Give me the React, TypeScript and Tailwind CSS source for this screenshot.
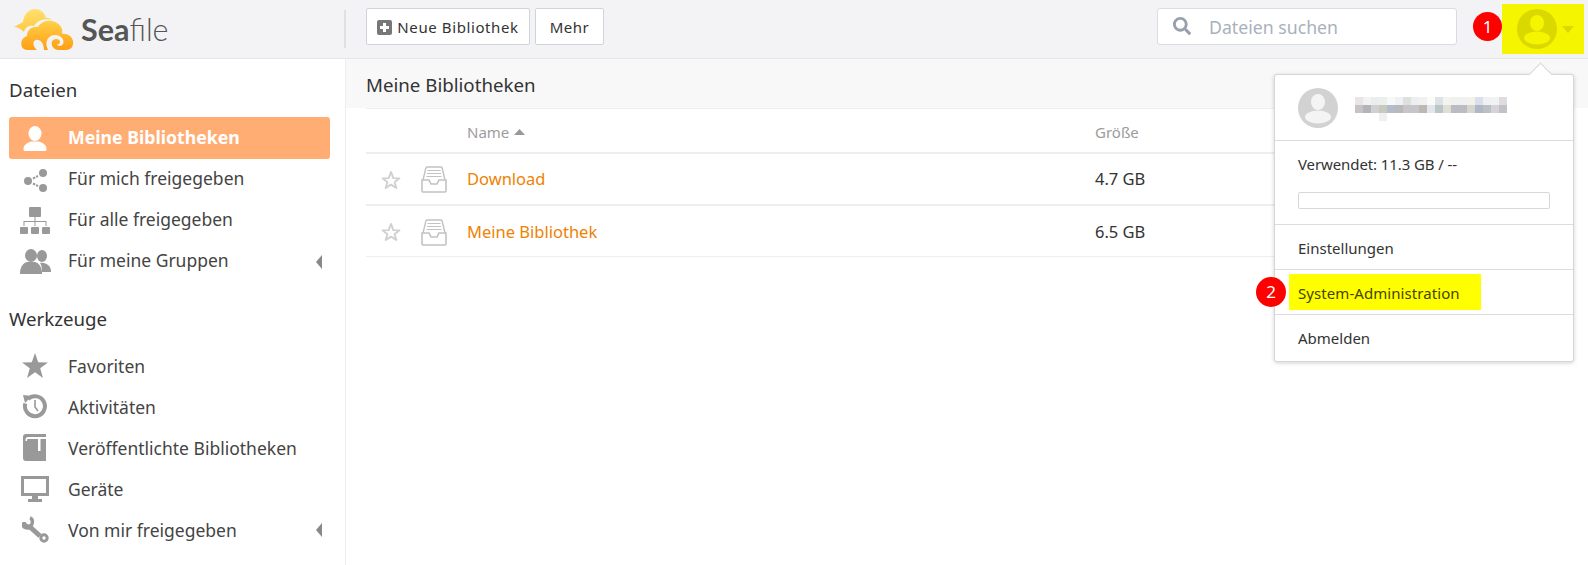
import React from "react";
import { FaSearch } from "react-icons/fa";

function Logo() {
  return (
    <svg width="62" height="41" viewBox="0 0 62 41" className="shrink-0">
      <defs>
        <linearGradient id="a" x1="0" y1="0" x2="0" y2="1"><stop offset="0" stopColor="#ffe070" /><stop offset="1" stopColor="#ffc93f" /></linearGradient>
        <linearGradient id="b" x1="0" y1="0" x2="0" y2="1"><stop offset="0" stopColor="#ffd04a" /><stop offset="1" stopColor="#ff9f14" /></linearGradient>
      </defs>
      <path d="M0 18 L9 13 C10 5 15 0 21 0 C27 0 31 4 32 9 C36 9 37 10 38 11 C30 9 23 12 20 17 C14 16 11 19 10 23 C7 20 4 18 0 18Z" fill="url(#a)" />
      <path d="M14 41 C8 41 6 36 8 31 C10 28 12 27 13 27 C13 21 18 17 24 18 C28 11 37 10 43 14 C48 17 49 22 48 25 C53 24 58 27 59 32 C60 37 57 41 52 41 L44 41 C38 40 36 34 39 31 C42 29 46 30 46 33 C46 35 44 36 43 35 C43 37 47 38 49 35 C51 31 47 26 41 26 C34 26 30 33 34 41 L30 41 C30 34 26 30 22 31 C18 32 19 38 23 41Z" fill="url(#b)" />
    </svg>
  );
}

function Avatar({ circle, fill }: { circle: string; fill: string }) {
  return (
    <svg width="40" height="40" viewBox="0 0 40 40" className="shrink-0">
      <circle cx="20" cy="20" r="20" fill={circle} />
      <ellipse cx="20" cy="14" rx="7" ry="8" fill={fill} />
      <ellipse cx="20" cy="29" rx="13" ry="6.5" fill={fill} />
    </svg>
  );
}

function Inbox() {
  return (
    <svg width="26" height="27" viewBox="0 0 26 27" fill="none" stroke="#c2c2c2" strokeWidth="1.4">
      <path d="M2 14 L5 1.5 Q5.3 1 6 1 H20 Q20.7 1 21 1.5 L24 14" />
      <path d="M6.5 4.5 H19.5 M6 7.5 H20 M5.5 10.5 H20.5" strokeWidth="1.2" />
      <path d="M1 14 H8 L10 18 H16 L18 14 H25 V25 Q25 26 24 26 H2 Q1 26 1 25Z" strokeWidth="1.6" />
    </svg>
  );
}

function UserIcon() {
  return (
    <svg width="24" height="25" viewBox="0 0 24 25" fill="#fff">
      <ellipse cx="12" cy="7.5" rx="6.5" ry="7.5" />
      <path d="M0.5 24 C0 19 4 17 8 15.5 H16 C20 17 24 19 23.5 24 Q23 25 22 25 H2 Q1 25 0.5 24Z" />
    </svg>
  );
}

function ShareIcon() {
  return (
    <svg width="24" height="24" viewBox="0 0 24 24" fill="#999" stroke="#999">
      <circle cx="5" cy="13" r="4" stroke="none" />
      <circle cx="20" cy="5" r="4" stroke="none" />
      <circle cx="20" cy="20" r="4" stroke="none" />
      <path d="M10 10.5 L15 8 M10 15.5 L15 18" strokeWidth="2" strokeDasharray="2.5 1" />
    </svg>
  );
}

function SitemapIcon() {
  return (
    <svg width="30" height="27" viewBox="0 0 30 27" fill="#999">
      <rect x="9" y="0" width="12" height="10" rx="1" />
      <rect x="0" y="20" width="8" height="7" rx="1" />
      <rect x="11" y="20" width="8" height="7" rx="1" />
      <rect x="22" y="20" width="8" height="7" rx="1" />
      <path d="M14.5 10 H15.5 V14 H26.5 V19 H25.5 V15 H15.5 V19 H14.5 V15 H4.5 V19 H3.5 V14 H14.5Z" />
    </svg>
  );
}

function UsersIcon() {
  return (
    <svg width="31" height="25" viewBox="0 0 31 25" fill="#999">
      <ellipse cx="22" cy="7" rx="5" ry="6" />
      <path d="M20 14 C26 13 31 17 31 22 V23 H22 C22 18 21 15 20 14Z" />
      <ellipse cx="11" cy="6.5" rx="6" ry="6.5" />
      <path d="M7 13 H15 C19 14 22 18 22 25 H0 C0 18 3 14 7 13Z" />
    </svg>
  );
}

function StarIcon() {
  return (
    <svg width="26" height="25" viewBox="0 0 26 25" fill="#999">
      <polygon points="13,0 16.2,9.2 26,9.5 18.2,15.3 21,25 13,19.3 5,25 7.8,15.3 0,9.5 9.8,9.2" />
    </svg>
  );
}

function HistoryIcon() {
  return (
    <svg width="26" height="25" viewBox="0 0 26 25" fill="none" stroke="#999">
      <path d="M6 5 A10 10 0 1 1 3.3 9.5" strokeWidth="4" />
      <path d="M1 1 L10 2 L3 9Z" fill="#999" stroke="none" />
      <path d="M13 6 V13 L16 17" strokeWidth="1.6" />
    </svg>
  );
}

function BookIcon() {
  return (
    <svg width="24" height="27" viewBox="0 0 24 27">
      <path d="M3 0 H23 V27 H3 Q0 27 0 24 V3 Q0 0 3 0Z" fill="#999" />
      <path d="M23 3 H5 Q3 3 2.5 5 V7 H4 V6 Q4 5 5 5 H15 V17 H17.5 V5 H23Z" fill="#fff" />
    </svg>
  );
}

function DesktopIcon() {
  return (
    <svg width="28" height="26" viewBox="0 0 28 26" fill="#999">
      <path fillRule="evenodd" d="M0 0 H28 V20 H0Z M3 3 V17 H25 V3Z" />
      <path d="M11 20 H17 V23 H21 V26 H7 V23 H11Z" />
    </svg>
  );
}

function WrenchIcon() {
  return (
    <svg width="27" height="27" viewBox="0 0 27 27" fill="none" stroke="#999">
      <path d="M1 7 C1 10 4 12 8 11 L18 20" strokeWidth="5" />
      <path d="M1.5 7 L6 8 L9 5 L8 1 C4 1 1.5 3 1.5 7Z" fill="#fff" stroke="none" />
      <path d="M2 6 C2 9 6 11 9 10 C11 7 11 3 8 2" strokeWidth="3.5" />
      <circle cx="22" cy="22" r="3.2" strokeWidth="3" />
    </svg>
  );
}

function NavRow({ icon, label, active, caret, upper }: { icon: React.ReactNode; label: string; active?: boolean; caret?: boolean; upper?: boolean }) {
  return (
    <div className={active ? "flex h-[42px] items-center rounded-[3px] bg-[#ffad73] font-bold text-white" : "flex h-[41px] items-center text-[#444]"}>
      <div className="flex w-[59px] justify-center pr-[7px]">{icon}</div>
      <span className={`flex-1 leading-[40px] ${active ? "text-[17.7px]" : "text-[17.5px]"} ${upper ? "pb-[3px]" : "pt-[1px]"}`}>{label}</span>
      {caret && (
        <svg width="6" height="14" viewBox="0 0 6 14" className="mr-[8px]"><polygon points="6,0 6,14 0,7" fill="#888" /></svg>
      )}
    </div>
  );
}

function TableRow({ name, size }: { name: string; size: string }) {
  return (
    <div className="flex h-[52px] items-center border-b-2 border-[#eeeeee] pt-[1px] text-[16.5px] last:h-[51px] last:border-b last:pt-[2px]">
      <div className="flex w-[49px] justify-center">
        <svg width="20" height="20" viewBox="0 0 26 25" fill="none" stroke="#d0d0d0" strokeWidth="2.4" strokeLinejoin="round">
          <polygon points="13,2 16,10 24,10.3 17.6,15.3 20,23 13,18.5 6,23 8.4,15.3 2,10.3 10,10" />
        </svg>
      </div>
      <div className="flex w-[37px] justify-center"><Inbox /></div>
      <div className="w-[643px] pl-[15px] text-[#ee8204]">{name}</div>
      <div className="text-[#333]">{size}</div>
    </div>
  );
}

const row1 = ["#e9e5e5", "#f2f2f2", "#ebecec", "#edefee", "#f6f8f9", "#f0f1f2", "#dde0de", "#edeeef", "#f0f1f0", "#fbfbfa", "#dde3e5", "#f3f4f2", "#eff1f0", "#f0f0f0", "#f4f0ec", "#d9dfeb", "#eff1f2", "#f1f2f2", "#dedce0"];
const row2 = ["#c6c4c6", "#b4b4b8", "#cfd1d0", "#c8c9bd", "#b4bccc", "#b9b9bb", "#c6c6c6", "#c6c6c8", "#bcb8b4", "#e3e7ec", "#bac6c8", "#dfdfd6", "#bbbbc1", "#bcbcc1", "#d6d6d0", "#b0b8c8", "#bcc0c4", "#d6d2d6", "#c2c2c6"];

export default function App() {
  return (
    <div className="relative flex h-[565px] w-[1588px] flex-col overflow-hidden bg-white font-['Noto_Sans',sans-serif] text-[#333]">
      <header className="flex h-[59px] shrink-0 items-center border-b border-[#e6e6e8] bg-[#f3f3f6]">
        <div className="flex h-[38px] w-[346px] shrink-0 items-center border-r-2 border-[#e0e0e0] pl-[14px]">
          <Logo />
          <span className="ml-[5px] font-['Lato',sans-serif] text-[30.5px] leading-[38px] text-[#555]"><b>Sea</b><span className="font-light">file</span></span>
        </div>
        <div className="-mt-[6px] ml-[20px] flex gap-[5px]">
          <button className="flex h-[37px] w-[164px] items-center justify-center gap-[5px] rounded-[2px] border border-[#ced3dc] bg-white pt-[2px] text-[15px] tracking-[0.6px] text-[#333]">
            <svg width="15" height="15" viewBox="0 0 15 15"><rect width="15" height="15" rx="2" fill="#777" /><path d="M6 3 H9 V6 H12 V9 H9 V12 H6 V9 H3 V6 H6Z" fill="#fff" /></svg>
            Neue Bibliothek
          </button>
          <button className="h-[37px] w-[69px] rounded-[2px] border border-[#ced3dc] bg-white pt-[2px] text-[15px] tracking-[0.5px] text-[#333]">Mehr</button>
        </div>
        <div className="-mt-[6px] ml-auto flex h-[37px] w-[300px] items-center rounded-[3px] border border-[#d8dce4] bg-white pl-[15px] text-[17.7px] text-[#a9b1bd]">
          <FaSearch size={18} className="mr-[18px] text-[#9aa0ab]" />
          <span className="pt-[2px]">Dateien suchen</span>
        </div>
        <div className="ml-[45px] mr-[4px] flex h-[50px] w-[82px] items-center bg-[#f5f500] pl-[15px]">
          <Avatar circle="#d9d900" fill="#f5f500" />
          <svg width="12" height="7" viewBox="0 0 12 7" className="ml-[5px]"><polygon points="0,0 12,0 6,7" fill="#d9d900" /></svg>
        </div>
      </header>

      <div className="flex min-h-0 flex-1">
        <aside className="w-[346px] shrink-0 border-r border-[#eeeeee] pl-[9px] pr-[15px]">
          <div className="flex h-[58px] items-center pt-[5px] text-[18.7px] text-[#333]">Dateien</div>
          <NavRow upper active icon={<UserIcon />} label="Meine Bibliotheken" />
          <NavRow upper icon={<ShareIcon />} label="Für mich freigegeben" />
          <NavRow upper icon={<SitemapIcon />} label="Für alle freigegeben" />
          <NavRow upper caret icon={<UsersIcon />} label="Für meine Gruppen" />
          <div className="flex h-[51px] items-end text-[18.7px] text-[#333]">Werkzeuge</div>
          <div className="h-[12px]" />
          <NavRow icon={<StarIcon />} label="Favoriten" />
          <NavRow icon={<HistoryIcon />} label="Aktivitäten" />
          <NavRow icon={<BookIcon />} label="Veröffentlichte Bibliotheken" />
          <NavRow icon={<DesktopIcon />} label="Geräte" />
          <NavRow caret icon={<WrenchIcon />} label="Von mir freigegeben" />
        </aside>

        <main className="min-w-0 flex-1">
          <div className="flex h-[49px] items-center bg-[#f8f8f8] pl-[20px] pt-[3px] text-[18.7px] text-[#333]">Meine Bibliotheken</div>
          <div className="mx-[20px] border-t border-[#eeeeee]">
            <div className="flex h-[45px] items-center border-b-2 border-[#eeeeee] pt-[3px] text-[15px] text-[#9c9c9c]">
              <div className="flex w-[729px] items-center pl-[101px]">
                Name
                <svg width="11" height="6" viewBox="0 0 11 6" className="ml-[5px]"><polygon points="5.5,0 11,6 0,6" fill="#999" /></svg>
              </div>
              <div>Größe</div>
            </div>
            <TableRow name="Download" size="4.7 GB" />
            <TableRow name="Meine Bibliothek" size="6.5 GB" />
          </div>
        </main>
      </div>

      <div className="absolute left-[1473px] top-[12px] flex h-[29px] w-[29px] items-center justify-center rounded-full bg-[#fe0000] text-[17px] text-white">1</div>

      <div className="absolute left-[1274px] top-[74px] w-[300px] rounded-[3px] border border-[#d6d6d6] bg-white text-[15px] text-[#333] shadow-[0_1px_4px_rgba(0,0,0,0.18)]">
        <div className="absolute -top-[9px] left-[257px] h-[17px] w-[17px] rotate-45 border-l border-t border-[#d6d6d6] bg-white" />
        <div className="relative flex h-[66px] items-center border-b border-[#dcdcdc] pl-[23px]">
          <Avatar circle="#d2d2d2" fill="#f4f4f4" />
          <svg width="152" height="24" className="ml-[17px] mt-[3px]">
            {row1.map((c, i) => <rect key={`a${i}`} x={i * 8} y={0} width="8" height="8" fill={c} />)}
            {row2.map((c, i) => <rect key={`b${i}`} x={i * 8} y={8} width="8" height="8" fill={c} />)}
            <rect x={24} y={16} width="8" height="8" fill="#f0f0f0" />
          </svg>
        </div>
        <div className="h-[84px] border-b border-[#dcdcdc] px-[23px] pt-[12px]">
          <div className="tracking-[-0.1px]">Verwendet: 11.3 GB / --</div>
          <div className="mt-[16px] h-[17px] rounded-[2px] border border-[#d8d8d8]" />
        </div>
        <div className="flex h-[45px] items-center border-b border-[#dcdcdc] pl-[23px] pt-[2px]">Einstellungen</div>
        <div className="flex h-[45px] items-center border-b border-[#dcdcdc] pl-[14px]">
          <span className="flex h-[36px] w-[192px] items-center bg-[#ffff00] pl-[9px] pt-[2px] tracking-[0.07px] text-[#444400]">System-Administration</span>
        </div>
        <div className="flex h-[46px] items-center pl-[23px]">Abmelden</div>
      </div>
      <div className="absolute left-[1256px] top-[277px] flex h-[30px] w-[30px] items-center justify-center rounded-full bg-[#fe0000] text-[17px] text-white">2</div>
    </div>
  );
}
